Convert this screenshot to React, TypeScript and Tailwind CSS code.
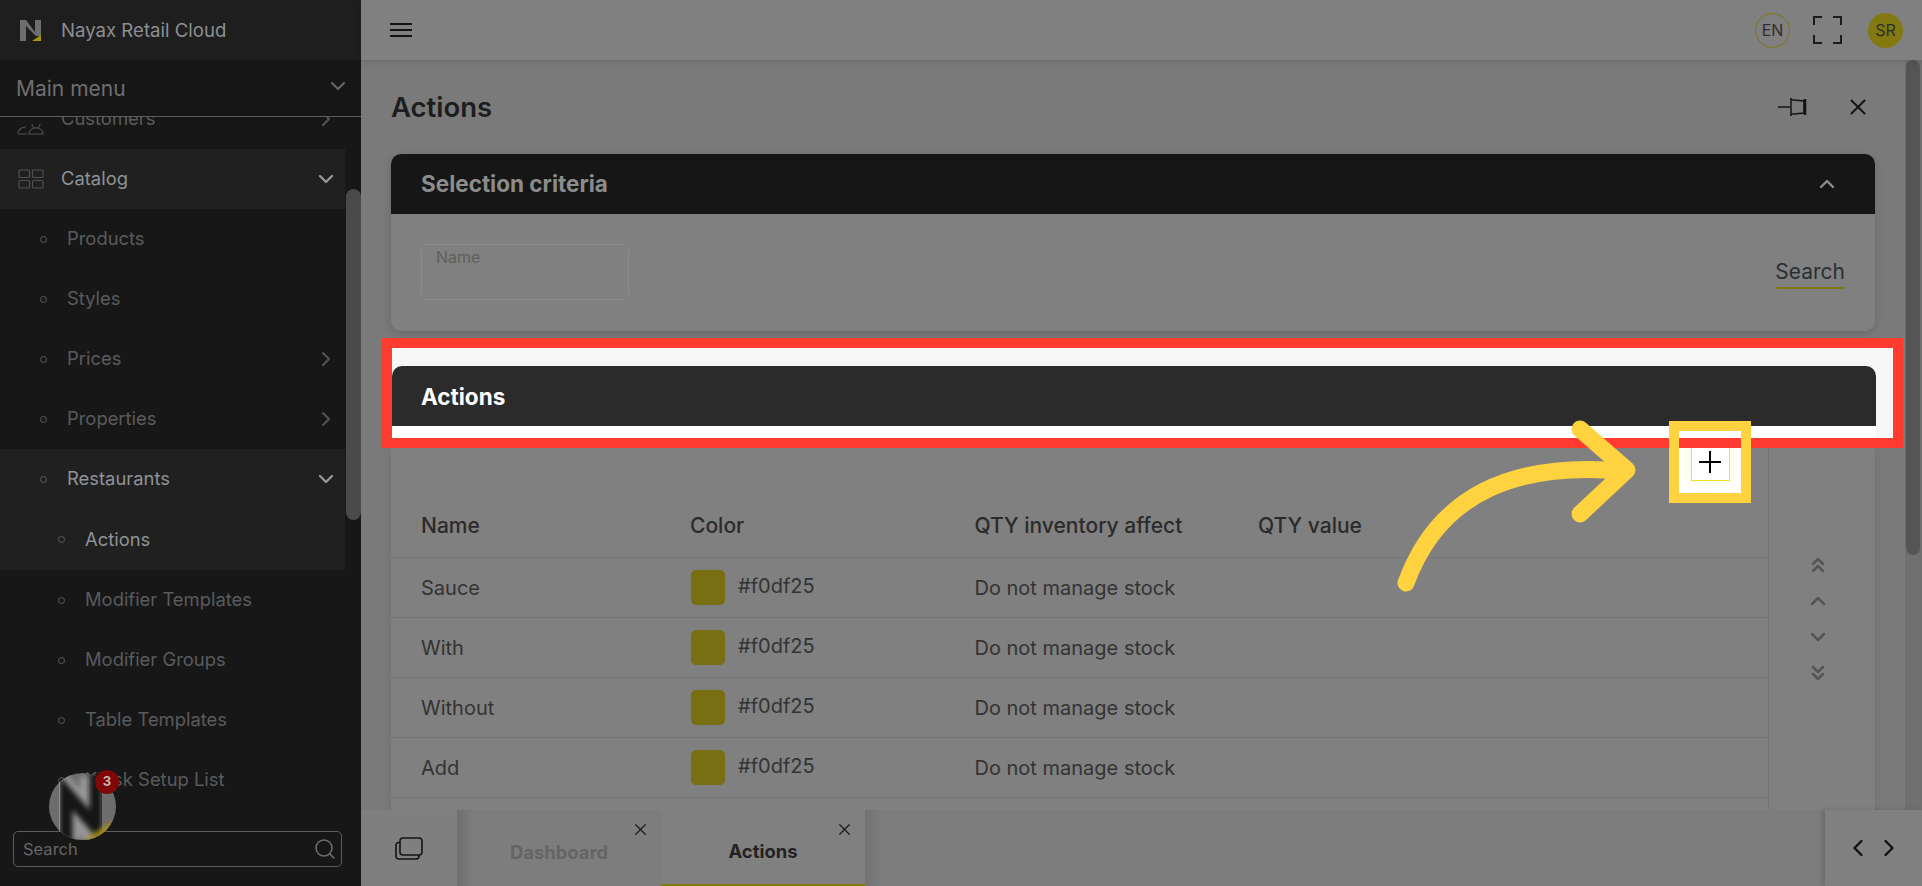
import React from 'react';
import { ChevronDown, ChevronRight, ChevronUp, ChevronLeft, ChevronsUp, ChevronsDown, Search, X } from 'lucide-react';

const rows = ['Sauce', 'With', 'Without', 'Add'];

const NayaxLogo = () => (
  <svg width="22" height="23" viewBox="0 0 22 23">
    <path d="M0 1h6l9 12V1h6v16h-5L6 7v15H0z" fill="#6e6e6e" />
    <path d="M12 22l9-6v6z" fill="#a8930f" />
  </svg>
);

const FloatingBadge = () => (
  <div className="absolute left-[49px] top-[773px] z-20 h-[67px] w-[67px]">
    <svg width="67" height="67" viewBox="0 0 67 67" className="rounded-full">
      <defs>
        <filter id="soft" x="-20%" y="-20%" width="140%" height="140%">
          <feGaussianBlur stdDeviation="2.4" />
        </filter>
      </defs>
      <rect width="67" height="67" fill="#6d6d6d" />
      <path d="M16 67V22l30 34V4" fill="none" stroke="#a8a8a8" strokeWidth="30" filter="url(#soft)" opacity=".7" />
      <path d="M17 70V20L47 54V0" fill="none" stroke="#141414" strokeWidth="13" filter="url(#soft)" />
      <path d="M34 68l30-20 3 19z" fill="#a08c12" filter="url(#soft)" />
    </svg>
    <span className="absolute left-[46px] top-[-3px] flex h-[24px] w-[24px] items-center justify-center rounded-full bg-[#800808] text-[13px] font-bold text-[#c9b4b4]">3</span>
  </div>
);

const SideRow = ({ label, indent = 0, active = false, chevron, tall = false }: { label: string; indent?: number; active?: boolean; chevron?: 'right' | 'down'; tall?: boolean }) => (
  <div className={`flex ${tall ? 'h-[61px]' : 'h-[60px]'} items-center ${active ? 'bg-[#202020]' : ''}`}>
    <span className={`h-[7px] w-[7px] shrink-0 rounded-full border border-[#5c5c5c] ${indent ? 'ml-[58px]' : 'ml-[40px]'}`} />
    <span className={`ml-[20px] flex-1 text-[18.400px] ${active ? 'text-[#8f9296]' : 'text-[#595b5d]'}`}>{label}</span>
    {chevron === 'right' && <ChevronRight size={24} className="mr-[7px] text-[#555555]" />}
    {chevron === 'down' && <ChevronDown size={24} strokeWidth={2.4} className="mr-[7px] text-[#969696]" />}
  </div>
);

const Sidebar = () => (
  <aside className="flex h-full w-[361px] shrink-0 flex-col bg-[#171717]">
    <div className="flex h-[60px] shrink-0 items-center bg-[#1e1e1e] pl-[20px]">
      <NayaxLogo />
      <span className="ml-[19px] mt-[2px] text-[18.600px] text-[#8b8f93]">Nayax Retail Cloud</span>
    </div>
    <div className="flex h-[57px] shrink-0 items-center justify-between border-b border-[#5c5c5c] bg-[#161616] pl-[16px] pr-[11px]">
      <span className="mt-[2px] text-[21px] text-[#6f6f6f]">Main menu</span>
      <ChevronDown size={24} className="-mt-[5px] text-[#666666]" />
    </div>
    <div className="relative flex-1 overflow-hidden">
      <div className="-mt-[28px] w-[345px]">
        <div className="flex h-[60px] items-center">
          <svg width="28" height="14" viewBox="0 0 28 14" className="ml-[17px] mt-[18px] shrink-0" fill="none" stroke="#505050" strokeWidth="1.2">
            <path d="M1 13c0-4 3-7 8-7M1 13h9" />
            <path d="M12 13c0-4 3-6 7-6s7 2 7 6zM15 3a4 4 0 0 0 8 0" />
          </svg>
          <span className="ml-[16px] flex-1 text-[18.400px] text-[#595b5d]">Customers</span>
          <ChevronRight size={24} className="mr-[7px] text-[#555555]" />
        </div>
        <div className="flex h-[60px] items-center bg-[#202020]">
          <svg width="26" height="20" viewBox="0 0 26 20" className="ml-[18px] shrink-0" fill="none" stroke="#505050" strokeWidth="1.2">
            <rect x="1" y="1" width="10.500" height="7.500" rx="1" />
            <rect x="14.500" y="1" width="10.500" height="7.500" rx="1" />
            <rect x="1" y="11.500" width="10.500" height="7.500" rx="1" />
            <rect x="14.500" y="11.500" width="10.500" height="7.500" rx="1" />
          </svg>
          <span className="ml-[17px] flex-1 text-[18.400px] text-[#8f9296]">Catalog</span>
          <ChevronDown size={24} strokeWidth={2.4} className="mr-[7px] text-[#969696]" />
        </div>
        <SideRow label="Products" />
        <SideRow label="Styles" />
        <SideRow label="Prices" chevron="right" />
        <SideRow label="Properties" chevron="right" />
        <SideRow label="Restaurants" active chevron="down" />
        <SideRow label="Actions" indent={1} active tall />
        <SideRow label="Modifier Templates" indent={1} />
        <SideRow label="Modifier Groups" indent={1} />
        <SideRow label="Table Templates" indent={1} />
        <SideRow label="Kiosk Setup List" indent={1} />
      </div>
      <div className="absolute right-0 top-[72px] h-[331px] w-[15px] rounded-[8px] bg-[#4a4a4a]" />
      <div className="absolute bottom-[19px] left-[13px] flex h-[36px] w-[329px] items-center justify-between rounded-[5px] border border-[#5c5c5c] bg-[#171717] pl-[9px] pr-[4px]">
        <span className="text-[16.500px] text-[#666666]">Search</span>
        <Search size={24} strokeWidth={1.5} className="text-[#6f6f6f]" />
      </div>
    </div>
  </aside>
);

const TopBar = () => (
  <header className="z-[1] flex h-[60px] shrink-0 items-center justify-between bg-[#808080] pl-[29px] pr-[19px] shadow-[0_2px_6px_rgba(0,0,0,0.12)]">
    <svg width="22" height="14" viewBox="0 0 22 14" stroke="#141414" strokeWidth="1.8">
      <path d="M0 1h22M0 7h22M0 13h22" />
    </svg>
    <div className="flex items-center">
      <span className="flex h-[35px] w-[35px] items-center justify-center rounded-full border border-[#7f7614] text-[16px] text-[#2e2e2e]">EN</span>
      <svg width="29" height="28" viewBox="0 0 29 28" fill="none" stroke="#1c1c1c" strokeWidth="2" className="ml-[23px]">
        <path d="M9 1H1v8M20 1h8v8M9 27H1v-8M20 27h8v-8" />
      </svg>
      <span className="ml-[26px] flex h-[35px] w-[35px] items-center justify-center rounded-full bg-[#827a10] text-[16px] text-[#2e2e2e]">SR</span>
    </div>
  </header>
);

const ActionsTable = () => (
  <div className="relative flex h-[400px] w-[1484px] bg-[#808080] shadow-[0_2px_10px_rgba(0,0,0,0.08)]">
    <div className="flex-1">
      <div className="flex h-[45px] justify-end pr-[27px]">
        <div className="flex h-[45px] w-[62px] items-end justify-center bg-white pb-[12px]">
          <button className="flex h-[38px] w-[39px] shrink-0 items-center justify-center border border-[#f0df25] bg-white text-black shadow-[0_0_10px_rgba(240,223,37,0.25)]">
            <svg width="22" height="22" viewBox="0 0 22 22" stroke="#000" strokeWidth="2"><path d="M11 0v22M0 11h22" /></svg>
          </button>
        </div>
      </div>
      <div className="grid h-[65px] grid-cols-[300px_283.5px_283.5px_1fr] items-center border-b border-[#757575] pl-[30px] pt-[2px] text-[21px] font-medium text-[#2b2b2b]">
        <span>Name</span>
        <span className="-ml-[31px]">Color</span>
        <span className="-ml-[30px]">QTY inventory affect</span>
        <span className="-ml-[30px]">QTY value</span>
      </div>
      {rows.map((name) => (
        <div key={name} className="grid h-[60px] grid-cols-[300px_283.5px_283.5px_1fr] items-center border-b border-[#757575] pl-[30px] text-[20px] text-[#333333]">
          <span>{name}</span>
          <span className="-ml-[30px] flex items-center">
            <span className="h-[35px] w-[34px] rounded-[5px] bg-[#786f12]" />
            <span className="ml-[13px] -mt-[4px]">#f0df25</span>
          </span>
          <span className="-ml-[30px]">Do not manage stock</span>
          <span />
        </div>
      ))}
      <div className="ml-[300px] mt-[12px] h-[35px] w-[34px] rounded-[5px] bg-[#786f12]" />
    </div>
    <div className="flex w-[107px] flex-col items-start border-l border-[#757575] pl-[37px] pt-[99px] text-[#555555]">
      <span className="flex h-[36px] items-center"><ChevronsUp size={24} strokeWidth={2.5} /></span>
      <span className="flex h-[36px] items-center"><ChevronUp size={24} strokeWidth={2.5} /></span>
      <span className="flex h-[36px] items-center"><ChevronDown size={24} strokeWidth={2.5} /></span>
      <span className="flex h-[36px] items-center"><ChevronsDown size={24} strokeWidth={2.5} /></span>
    </div>
  </div>
);

const Content = () => (
  <div className="flex min-h-0 flex-1">
    <div className="w-[1544px] overflow-hidden bg-[#7a7a7a] pl-[30px]">
      <div className="flex h-[94px] w-[1484px] items-center justify-between">
        <h1 className="mt-[1px] text-[27.500px] font-semibold text-[#1d1d1d]">Actions</h1>
        <div className="flex items-center pr-[4px]">
          <svg width="30" height="20" viewBox="0 0 30 20" fill="none" stroke="#141414" strokeWidth="1.5">
            <path d="M0 10h12" />
            <path d="M13 1v18M13 3h3l10 1v12l-10 1h-3" />
            <path d="M27 2v16" strokeWidth="2.500" />
          </svg>
          <X size={26} strokeWidth={1.8} className="ml-[37px] text-[#141414]" />
        </div>
      </div>
      <section className="h-[177px] w-[1484px] rounded-[10px] bg-[#808080] shadow-[0_2px_8px_rgba(0,0,0,0.15)]">
        <div className="flex h-[60px] items-center justify-between rounded-t-[10px] bg-[#161616] pl-[30px] pr-[36px]">
          <span className="text-[22.500px] font-bold text-[#8c8c8c]">Selection criteria</span>
          <ChevronUp size={24} strokeWidth={2.4} className="text-[#8c8c8c]" />
        </div>
        <div className="flex items-start justify-between pl-[30px] pr-[30px] pt-[30px]">
          <div className="h-[56px] w-[208px] rounded-[6px] border border-[#8a8a8a] pl-[14px] text-[16px] text-[#5f5f5f]">Name</div>
          <div className="mt-[14px] flex flex-col">
            <span className="text-[21px] leading-[28px] text-[#2a2f35]">Search</span>
            <span className="mt-[1px] h-[2px] rounded-b bg-[#7f7614]" />
          </div>
        </div>
      </section>
      <div className="relative z-10 -ml-[9px] mt-[7px] h-[110px] w-[1521px] border-[10px] border-[#ff3b30] bg-[#f6f6f6]">
        <div className="mt-[18px] flex h-[60px] w-[1484px] items-center rounded-t-[10px] bg-[#2b2b2b] pl-[29px]">
          <span className="mt-[2px] text-[22.500px] font-bold text-white">Actions</span>
        </div>
        <div className="h-[12px] w-[1484px] bg-white" />
      </div>
      <ActionsTable />
    </div>
    <div className="w-[17px] shrink-0 bg-[#707070] pr-[2px] pl-[1px]">
      <div className="h-[495px] rounded-[8px] bg-[#555555]" />
    </div>
  </div>
);

const TabBar = () => (
  <footer className="z-[1] flex h-[76px] shrink-0 bg-[#7f7f7f]">
    <div className="flex w-[96px] items-center pl-[34px]">
      <svg width="28" height="23" viewBox="0 0 28 23" fill="none" stroke="#141414" strokeWidth="1.6">
        <rect x="5" y="1" width="22" height="17" rx="3" />
        <path d="M5 5.500H3.500A2.500 2.500 0 0 0 1 8v11.500A2.500 2.500 0 0 0 3.500 22H21a3 3 0 0 0 3-3v-1" />
      </svg>
    </div>
    <div className="relative flex w-[204px] items-center justify-center bg-[linear-gradient(90deg,#6e6e6e,#7d7d7d_16px)] pt-[10px]">
      <span className="text-[18.400px] font-bold text-[#656565]">Dashboard</span>
      <X size={19} strokeWidth={1.6} className="absolute right-[11px] top-[10px] text-[#1c1c1c]" />
    </div>
    <div className="relative flex w-[204px] items-center justify-center rounded-t-[10px] border-b-[2px] border-[#827a10] bg-[#808080] pt-[10px]">
      <span className="text-[18.400px] font-bold text-[#222222]">Actions</span>
      <X size={19} strokeWidth={1.6} className="absolute right-[11px] top-[10px] text-[#1c1c1c]" />
    </div>
    <div className="flex-1 bg-[linear-gradient(90deg,#727272,#7d7d7d_16px)]" />
    <div className="flex w-[97px] items-center gap-[3px] bg-[#808080] pl-[19px] shadow-[-3px_0_5px_rgba(0,0,0,0.15)]">
      <ChevronLeft size={28} strokeWidth={2} className="text-[#111111]" />
      <ChevronRight size={28} strokeWidth={2} className="text-[#111111]" />
    </div>
  </footer>
);

const Callout = () => (
  <>
    <svg width="260" height="180" viewBox="0 0 260 180" fill="none" stroke="#ffd23f" strokeWidth="17" strokeLinecap="round" strokeLinejoin="round" className="absolute left-[1390px] top-[420px] z-20">
      <path d="M16 163C50 70 130 42 233 51" />
      <path d="M190 9l47 41-47 44" />
    </svg>
    <div className="absolute left-[1669px] top-[421px] z-20 h-[82px] w-[82px] border-[10px] border-[#ffd23f]" />
  </>
);

export default function App() {
  return (
    <div className="relative flex h-[886px] w-[1922px] overflow-hidden bg-[#808080] [font-family:Inter,sans-serif]">
      <Sidebar />
      <main className="flex min-w-0 flex-1 flex-col">
        <TopBar />
        <Content />
        <TabBar />
      </main>
      <FloatingBadge />
      <Callout />
    </div>
  );
}
